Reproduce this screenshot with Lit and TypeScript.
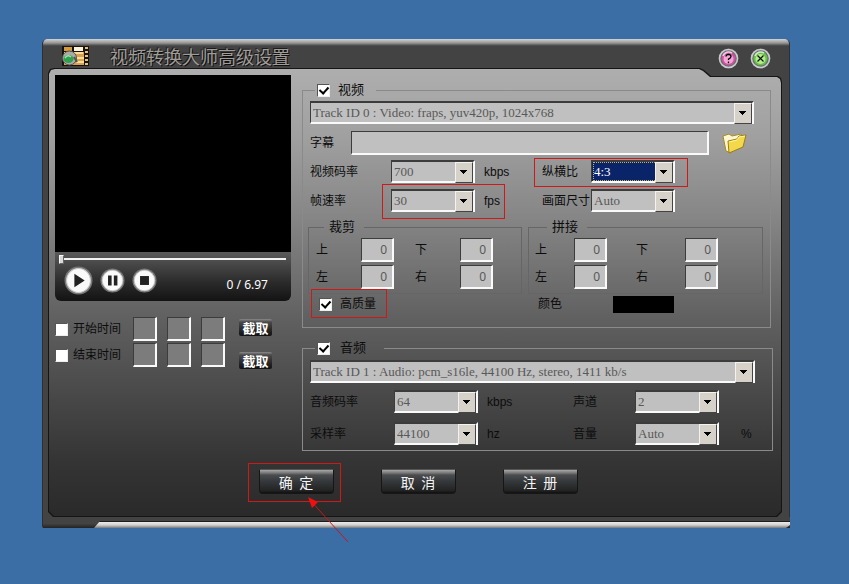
import { LitElement, html, css, svg } from "lit";
import { customElement } from "lit/decorators.js";

type Opts = { cls?: string; label: string };

@customElement("app-root")
export class AppRoot extends LitElement {
  static styles = css`
    :host {
      display: block;
      box-sizing: border-box;
      min-height: 100vh;
      padding: 39px 59px 39px 42px;
      background: #3a6ea5;
      color: #0c0c0c;
      font: 12px/16px "Liberation Sans", "Noto Sans CJK SC", sans-serif;
    }
    * { box-sizing: border-box; }
    button, input, select { margin: 0; padding: 0; font: inherit; border-radius: 0; }
    .dialog {
      border-radius: 5px 5px 2px 2px;
      background: linear-gradient(#d4d4d4, #969696 4px, #5a5a5a 6px, #434343 7px);
      border-left: 1px solid #2c2f33;
      border-right: 1px solid #2c2f33;
      min-width: 740px;
    }
    .titlebar {
      display: flex;
      align-items: center;
      height: 29px;
      padding: 5px 18px 0 18px;
    }
    .titlebar h1 {
      flex: 1;
      margin: 0 0 0 20px;
      font: 400 18px/24px "Noto Sans CJK SC", sans-serif;
      color: #a09c98;
      text-shadow: 1px 1px 0 #111, -1px -1px 0 #1c1c1c;
    }
    .orbs { display: flex; gap: 11px; padding-top: 4px; }
    .orb { width: 21px; height: 21px; border: 0; background: none; }
    .orb svg, .logo, .folder svg, .play svg { display: block; }
    .edge {
      --notch: polygon(0 5px, 2px 1px, 6px 0, calc(100% - 82px) 0, calc(100% - 78px) 2px, calc(100% - 71px) 8px, calc(100% - 4px) 8px, calc(100% - 1px) 10px, 100% 14px, 100% calc(100% - 5px), calc(100% - 5px) 100%, 5px 100%, 0 calc(100% - 5px));
      margin: 0 7px 0 5px;
      padding: 1px;
      background: #151515;
      clip-path: var(--notch);
    }
    .panel {
      clip-path: var(--notch);
      padding: 0 8px 22px 6px;
      background: linear-gradient(#aeaeae, #a0a0a0 15%, #868686 33%, #606060 56%, #474747 74%, #343434 88%, #2a2a2a);
    }
    .columns { display: flex; gap: 11px; }
    .left { width: 236px; padding-top: 6px; flex: none; }
    .right { flex: 1; min-width: 0; padding-top: 12px; }
    .screen { height: 177px; background: #000; }
    .player {
      height: 49px;
      padding: 3px 5px 0 4px;
      border-radius: 0 0 6px 6px;
      background: linear-gradient(#5a5a5a, #4b4b4b 20%, #2c2c2c 60%, #131313);
    }
    .seek {
      appearance: none;
      display: block;
      width: 100%;
      height: 9px;
      background: linear-gradient(#f2f2f2, #f2f2f2) 0 3px / 100% 2px no-repeat;
    }
    .seek::-webkit-slider-thumb {
      appearance: none;
      width: 5px;
      height: 9px;
      background: #d8d8d8;
      border: 1px solid #f8f8f8;
      border-right-color: #666;
      border-bottom-color: #666;
    }
    .transport { display: flex; align-items: center; gap: 7px; padding-left: 5px; height: 33px; }
    .play { border: 0; background: none; }
    .clock { margin-left: auto; padding: 8px 18px 0 0; color: #fff; font: 12px/16px "Noto Sans", sans-serif; white-space: pre; }
    .times { display: flex; gap: 14px; padding-top: 16px; }
    .stack { display: flex; flex-direction: column; gap: 2px; }
    .time { display: flex; align-items: center; }
    .time label { display: flex; align-items: center; gap: 5px; width: 78px; white-space: nowrap; }
    .time .sunk { width: 24px; background: #7c7c7c; }
    .time .sunk + .sunk { margin-left: 10px; }
    .cuts { display: flex; flex-direction: column; gap: 16px; padding-top: 2px; }
    .cut {
      width: 33px;
      height: 17px;
      border: 0;
      border-radius: 2px;
      color: #fff;
      font: 700 13px/16px "Noto Sans CJK SC", sans-serif;
      background: linear-gradient(#8a8a8a, #4a4a4a 3px, #2a2a2a 60%, #111);
    }
    .sunk {
      height: 24px;
      border: 1px solid #3c3c3c;
      border-right: 2px solid #fafafa;
      border-bottom: 2px solid #fafafa;
      background: #c0c0c0;
      color: #585858;
      font: 13px/20px "Liberation Serif", serif;
    }
    .num { width: 33px; padding-right: 5px; text-align: right; font: 12px/20px "Noto Sans", sans-serif; }
    .tick {
      appearance: none;
      flex: none;
      width: 13px;
      height: 13px;
      background: #fff;
      border: 1px solid #555;
      border-right-color: #eee;
      border-bottom-color: #eee;
      display: grid;
      place-items: center;
    }
    .tick.on::after {
      content: "";
      width: 4px;
      height: 7px;
      margin-bottom: 2px;
      border: solid #000;
      border-width: 0 2px 2px 0;
      transform: rotate(42deg);
    }
    fieldset { margin: 0; min-width: 0; border: 1px solid #8a8a8a; padding: 2px 16px 11px 7px; }
    legend { padding: 0; font-size: 13px; line-height: 18px; }
    .main > legend { margin-left: 5px; padding: 0 12px 0 2px; height: 18px; }
    .main > legend label { display: flex; align-items: center; gap: 8px; }
    .video { margin-right: 2px; }
    .audio { margin-top: 11px; padding: 3px 17px 5px 7px; }
    .audio > legend { padding-right: 18px; }
    .audio > legend label { gap: 10px; }
    .drop { position: relative; display: block; width: 84px; height: 23px; }
    .drop select {
      appearance: none;
      display: block;
      width: 100%;
      height: 100%;
      padding: 1px 18px 0 2px;
      border: 1px solid #3c3c3c;
      border-top-width: 2px;
      border-right: 2px solid #fafafa;
      border-bottom: 2px solid #fafafa;
      background: #c0c0c0;
      color: #585858;
      font: 13px/18px "Liberation Serif", serif;
    }
    .drop::after {
      content: "";
      position: absolute;
      top: 2px;
      right: 2px;
      width: 16px;
      height: 19px;
      pointer-events: none;
      border: 1px solid #f4f2ee;
      border-right-color: #444;
      border-bottom-color: #444;
      background: linear-gradient(#000, #000) 4px 7px / 7px 1px no-repeat, linear-gradient(#000, #000) 5px 8px / 5px 1px no-repeat, linear-gradient(#000, #000) 6px 9px / 3px 1px no-repeat, linear-gradient(#000, #000) 7px 10px / 1px 1px no-repeat, #d6d2ca;
    }
    .drop.wide { width: 100%; }
    .drop.active select {
      color: #fff;
      background: #0a246a;
      outline: 1px dotted #c8b060;
      outline-offset: -3px;
    }
    .source { display: flex; align-items: center; padding-top: 7px; }
    .source label { width: 41px; }
    .source .sunk { flex: 1; min-width: 0; }
    .folder { width: 26px; height: 22px; margin: 0 6px 0 13px; border: 0; background: none; }
    .line { display: flex; align-items: center; height: 23px; margin-top: 6px; }
    .source + .line { margin-top: 5px; }
    .field { display: flex; align-items: center; position: relative; white-space: nowrap; }
    .field.first { width: 232px; }
    .field.first > label { width: 81px; }
    .field.second > label { width: 49px; }
    .unit { margin-left: 9px; }
    .mark::after, .marked::after {
      content: "";
      position: absolute;
      border: 1px solid #d01818;
      pointer-events: none;
    }
    .ratio::after { inset: -2px -13px -4px -8px; }
    .rate { position: relative; display: flex; align-items: center; }
    .rate::after { inset: -5px -5px -7px -9px; }
    .boxes { display: grid; grid-template-columns: 214fr 235fr; gap: 6px; margin: 6px -9px 0 -2px; }
    .box { padding: 2px 28px 4px 7px; border-color: #666; }
    .box:last-child { padding-right: 44px; padding-left: 6px; }
    .box > legend { margin-left: 8px; padding: 0 9px 0 5px; }
    .box:last-child > legend { margin-left: 12px; }
    .pairs { display: flex; justify-content: space-between; }
    .pairs .stack { gap: 3px; }
    .pairs label { display: flex; align-items: center; gap: 33px; height: 24px; }
    .box:last-child label { gap: 27px; }
    .box:last-child .stack + .stack label { gap: 37px; }
    .extras { display: flex; align-items: center; padding: 3px 0 5px 9px; height: 22px; }
    .quality { position: relative; display: flex; align-items: center; gap: 8px; width: 219px; }
    .quality::after { inset: -7px 151px -6px -8px; }
    .colour { display: flex; align-items: center; gap: 51px; }
    .swatch { width: 61px; height: 17px; border: 0; background: #000; }
    .audio .line { margin-top: 7px; }
    .audio .line + .line { margin-top: 9px; }
    .audio .field.first { width: 263px; }
    .audio .field.first > label { width: 84px; }
    .audio .field.second > label { width: 62px; }
    .audio .second .unit { margin-left: 22px; }
    .actions { display: flex; justify-content: center; gap: 47px; padding: 18px 0 0 8px; }
    .spot { position: relative; }
    .spot::after { inset: -6px -7px -8px -11px; }
    .action {
      width: 75px;
      height: 25px;
      display: block;
      border: 1px solid #161616;
      border-top-color: #555;
      border-radius: 1px 1px 4px 4px;
      color: #f4f4f4;
      font: 14px/22px "Noto Sans CJK SC", sans-serif;
      white-space: pre;
      background: linear-gradient(#a8a8a8, #777 3px, #4a4c4e 5px, #35383b 50%, #222 90%, #111);
    }
    .dialog { position: relative; }
    .lower { position: relative; }
    .arrow {
      position: absolute;
      left: calc(50% - 112px);
      bottom: -16px;
      pointer-events: none;
    }
    .foot {
      height: 11px;
      margin-right: -1px;
      background: linear-gradient(#434343 60%, #222);
    }
    .strip {
      height: 11px;
      margin-left: 51px;
      background: linear-gradient(#1c1c1c 0 5px, #ececec 5px, #d0d0d0 8px, #777 11px);
      clip-path: polygon(6px 4px, 100% 4px, 100% 8px, calc(100% - 4px) 100%, 0 100%);
    }
  `;

  private drop(value: string, o: Opts) {
    return html`<span class="drop ${o.cls ?? ""}"><select id=${o.label}><option>${value}</option></select></span>`;
  }

  private time(text: string, id: string) {
    return html`<div class="time">
      <label><input class="tick" type="checkbox" />${text}</label>
      ${["时", "分", "秒"].map((u) => html`<input class="sunk" type="text" aria-label=${text + u} id=${id + u} />`)}
    </div>`;
  }

  private box(title: string) {
    const cell = (t: string) => html`<label>${t}<input class="sunk num" type="text" .value=${"0"} /></label>`;
    return html`<fieldset class="box">
      <legend>${title}</legend>
      <div class="pairs">
        <div class="stack">${cell("上")}${cell("左")}</div>
        <div class="stack">${cell("下")}${cell("右")}</div>
      </div>
    </fieldset>`;
  }

  private orb(label: string, ring: string, fill: string, glyph: unknown) {
    return html`<button class="orb" aria-label=${label}>
      <svg width="21" height="21" viewBox="0 0 21 21">
        <circle cx="10.5" cy="10.5" r="10" fill="#6d6d70" />
        <circle cx="10.5" cy="10.5" r="9" fill="none" stroke="#c9cccd" stroke-width="1.5" />
        <circle cx="10.5" cy="10.5" r="7" fill=${ring} />
        <circle cx="10.5" cy="11" r="5" fill=${fill} />
        <path d="M5 8a6 6 0 0 1 9-3" fill="none" stroke="#fff" stroke-opacity=".7" stroke-width="1.6" />
        ${glyph}
      </svg>
    </button>`;
  }

  private round(size: number, label: string, glyph: unknown) {
    return html`<button class="play" aria-label=${label}>
      <svg width=${size} height=${size} viewBox="0 0 28 28">
        <circle cx="14" cy="14" r="13.5" fill="#777" />
        <circle cx="14" cy="14" r="11.5" fill="#fafafa" stroke="#ccc" />
        ${glyph}
      </svg>
    </button>`;
  }

  render() {
    return html`
      <main class="dialog">
        <header class="titlebar">
          <svg class="logo" width="29" height="22" viewBox="0 0 29 22">
            <rect x="1" y="1" width="27" height="20" fill="#15130f" />
            <rect x="3" y="2" width="8" height="4" fill="#d99a3a" />
            <rect x="13" y="2" width="9" height="4" fill="#fff3d8" />
            <rect x="3" y="7" width="20" height="13" fill="#dba04a" />
            <path d="M3 8h19M14 13h9M15 17h8" stroke="#f7dda0" stroke-width="2" />
            <path d="M25.500 2v18" stroke="#f0c070" stroke-width="3" stroke-dasharray="2 2" />
            <circle cx="8.500" cy="13" r="7" fill="#aaa" stroke="#555" />
            <ellipse cx="7.500" cy="14" rx="5" ry="4" fill="#2fa04c" />
            <path d="M4 13q3-4 6-1" fill="none" stroke="#9be79f" stroke-width="1.500" />
            <path d="M13 12l3 5" stroke="#555" stroke-width="2" />
          </svg>
          <h1>视频转换大师高级设置</h1>
          <div class="orbs">
            ${this.orb("帮助", "#d24fa2", "#f3a6d6", svg`<path d="M8 8.500q0-2 2.500-2t2.500 2q0 1.300-2.500 2.600v1M10.500 13.500v1.700" fill="none" stroke="#000" stroke-width="1.300" />`)}
            ${this.orb("关闭", "#63c243", "#b4ee8a", svg`<path d="M7.500 7.500l6 6M13.500 7.500l-6 6" stroke="#111" stroke-width="1.200" />`)}
          </div>
        </header>
        <div class="edge"><div class="panel">
          <div class="columns">
            <section class="left">
              <div class="screen"></div>
              <div class="player">
                <input class="seek" type="range" min="0" max="697" .value=${"0"} aria-label="进度" />
                <div class="transport">
                  ${this.round(29, "播放", svg`<path d="M10 7.500l10 6.500l-10 6.500z" fill="#222" />`)}
                  ${this.round(25, "暂停", svg`<path d="M9 8.500h4v11h-4zM15.500 8.500h4v11h-4z" fill="#222" />`)}
                  ${this.round(25, "停止", svg`<path d="M9 9h10v10h-10z" fill="#222" />`)}
                  <span class="clock">0 / 6.97</span>
                </div>
              </div>
              <div class="times">
                <div class="stack">${this.time("开始时间", "s")}${this.time("结束时间", "e")}</div>
                <div class="cuts"><button class="cut">截取</button><button class="cut">截取</button></div>
              </div>
            </section>
            <section class="right">
              <fieldset class="main video">
                <legend><label><input class="tick on" type="checkbox" checked />视频</label></legend>
                <label aria-label="视频轨道">${this.drop("Track ID 0 : Video: fraps, yuv420p, 1024x768", { cls: "wide", label: "vtrack" })}</label>
                <div class="source">
                  <label for="subs">字幕</label><input id="subs" class="sunk" type="text" />
                  <button class="folder" aria-label="打开">
                    <svg width="26" height="22" viewBox="0 0 26 22">
                      <path d="M1 4l6-2 3 2 9-2 1 5-11 14-5-2z" fill="#fff6cf" stroke="#a68a2a" />
                      <path d="M6 9l9-2 2-3 7-1-3 12-14 6z" fill="#f3d84a" stroke="#9a7c16" />
                      <path d="M7 10l8-2 2-3 6-1" fill="none" stroke="#fff3a6" />
                    </svg>
                  </button>
                </div>
                <div class="line">
                  <div class="field first"><label for="vbit">视频码率</label>${this.drop("700", { label: "vbit" })}<span class="unit">kbps</span></div>
                  <div class="field second marked ratio"><label for="aspect">纵横比</label>${this.drop("4:3", { cls: "active", label: "aspect" })}</div>
                </div>
                <div class="line">
                  <div class="field first"><label for="fps">帧速率</label><div class="rate mark">${this.drop("30", { label: "fps" })}<span class="unit">fps</span></div></div>
                  <div class="field second"><label for="size">画面尺寸</label>${this.drop("Auto", { label: "size" })}</div>
                </div>
                <div class="boxes">${this.box("裁剪")}${this.box("拼接")}</div>
                <div class="extras">
                  <label class="quality mark"><input class="tick on" type="checkbox" checked />高质量</label>
                  <label class="colour">颜色<button class="swatch" aria-label="颜色"></button></label>
                </div>
              </fieldset>
              <fieldset class="main audio">
                <legend><label><input class="tick on" type="checkbox" checked />音频</label></legend>
                <label aria-label="音频轨道">${this.drop("Track ID 1 : Audio: pcm_s16le, 44100 Hz, stereo, 1411 kb/s", { cls: "wide", label: "atrack" })}</label>
                <div class="line">
                  <div class="field first"><label for="abit">音频码率</label>${this.drop("64", { label: "abit" })}<span class="unit">kbps</span></div>
                  <div class="field second"><label for="chan">声道</label>${this.drop("2", { label: "chan" })}</div>
                </div>
                <div class="line">
                  <div class="field first"><label for="hz">采样率</label>${this.drop("44100", { label: "hz" })}<span class="unit">hz</span></div>
                  <div class="field second"><label for="vol">音量</label>${this.drop("Auto", { label: "vol" })}<span class="unit">%</span></div>
                </div>
              </fieldset>
            </section>
          </div>
          <div class="actions">
            <div class="spot mark"><button class="action">确  定</button></div>
            <button class="action">取  消</button>
            <button class="action">注  册</button>
          </div>
        </div></div>
        <footer class="foot"><div class="strip"></div></footer>
        <svg class="arrow" width="46" height="48" viewBox="0 0 46 48">
          <path d="M5 3l39 43" stroke="#c81818" stroke-width="1" />
          <path d="M4 1l10 5-6 6z" fill="#f01010" />
        </svg>
      </main>
    `;
  }
}
